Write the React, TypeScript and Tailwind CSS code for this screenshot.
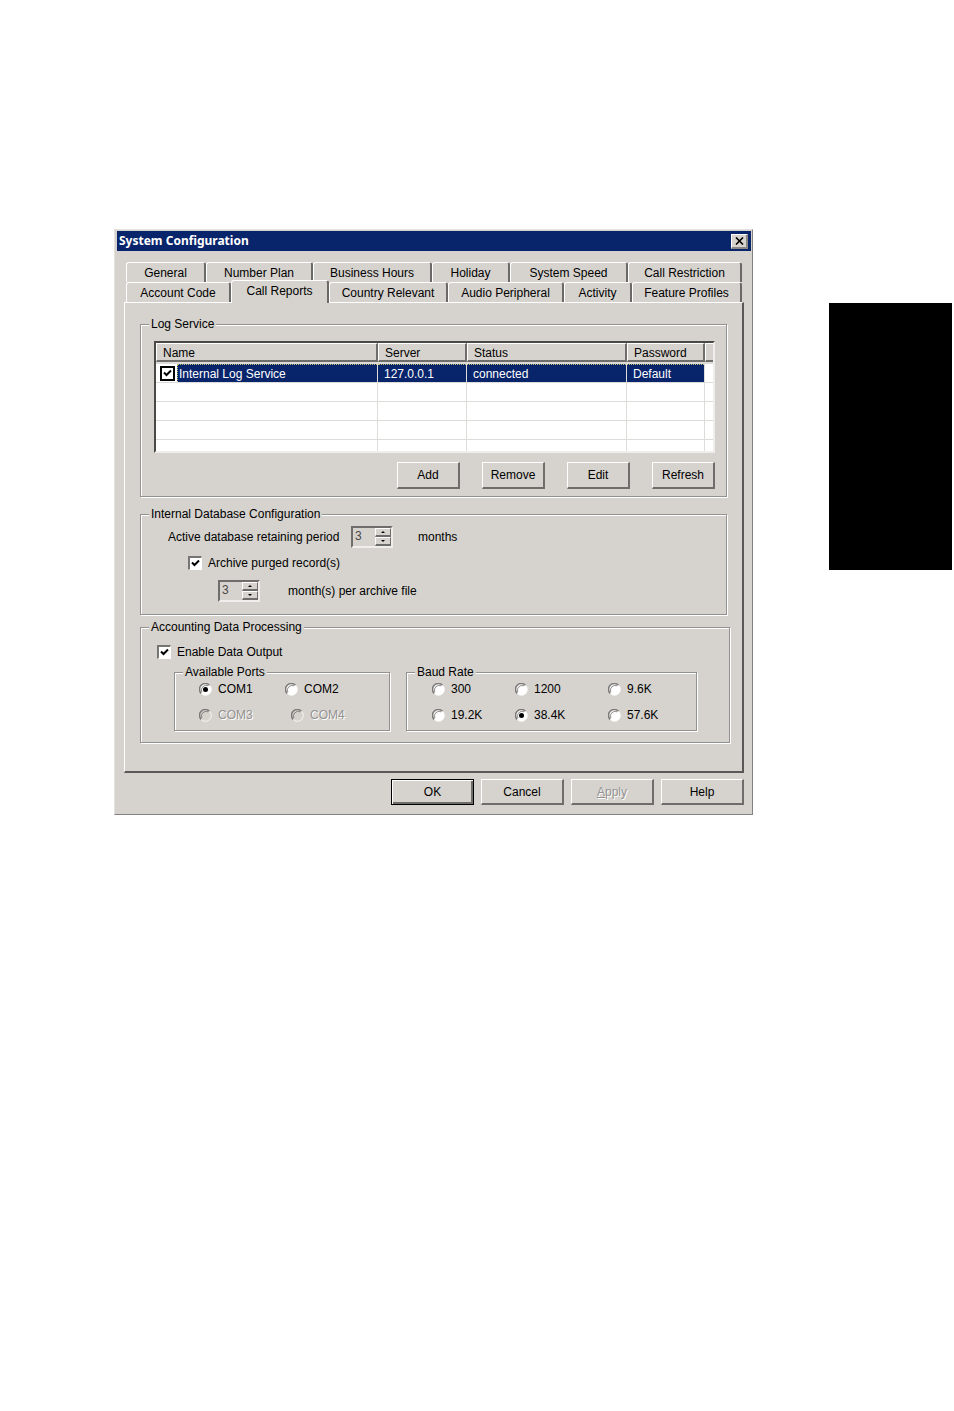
import { useState } from "react";
import type { ReactNode } from "react";
import clsx from "clsx";

const topTabs = ["General", "Number Plan", "Business Hours", "Holiday", "System Speed", "Call Restriction"];
const bottomTabs = ["Account Code", "Call Reports", "Country Relevant", "Audio Peripheral", "Activity", "Feature Profiles"];

const baudRates = ["300", "1200", "9.6K", "19.2K", "38.4K", "57.6K"];

function Tab({ label, active, onClick }: { label: string; active: boolean; onClick: () => void }) {
  return (
    <button
      type="button"
      role="tab"
      aria-selected={active}
      onClick={onClick}
      className={clsx(
        "min-w-0 whitespace-nowrap rounded-t-[3px] border-t border-l border-r-2 border-t-white border-l-white border-r-[#6b6967] bg-[#d6d3ce] text-center",
        active && "z-10 -mt-0.5 -mb-px pb-0.5"
      )}
    >
      {label}
    </button>
  );
}

function Group({ title, className, children }: { title: string; className?: string; children: ReactNode }) {
  return (
    <fieldset
      className={clsx(
        "min-w-0 border border-[#949291] shadow-[1px_1px_0_#fff,inset_1px_1px_0_#fff]",
        className
      )}
    >
      <legend className="ml-2 h-4 bg-[#d6d3ce] px-0.5 leading-4">{title}</legend>
      {children}
    </fieldset>
  );
}

function Button({ children, primary, small, disabled }: { children: ReactNode; primary?: boolean; small?: boolean; disabled?: boolean }) {
  return (
    <button
      type="button"
      disabled={disabled}
      className={clsx(
        "bg-[#d6d3ce]",
        small ? "h-[27px] w-[63px]" : "h-[26px] w-[83px]",
        primary
          ? "border border-black shadow-[inset_1px_1px_0_#fff,inset_-2px_-2px_0_#6f6d6b]"
          : "border-t border-l border-r-2 border-b-2 border-t-white border-l-white border-r-[#6f6d6b] border-b-[#6f6d6b]",
        disabled && "text-[#949291] [text-shadow:1px_1px_0_#fff]"
      )}
    >
      {children}
    </button>
  );
}

function CheckMark() {
  return (
    <svg viewBox="0 0 9 9" fill="none" stroke="black" strokeWidth="2" className="pointer-events-none invisible h-[9px] w-[9px] peer-checked:visible">
      <path d="M1 3.5l2.5 2.5L8 1.5" />
    </svg>
  );
}

function Check({ label }: { label: string }) {
  return (
    <label className="flex w-fit items-center gap-1.5 leading-4">
      <span className="grid h-3.5 w-3.5 place-items-center [&>*]:col-start-1 [&>*]:row-start-1">
        <input
          type="checkbox"
          defaultChecked
          className="peer h-3.5 w-3.5 appearance-none border-t-2 border-l-2 border-r border-b border-t-[#777573] border-l-[#777573] border-r-white border-b-white bg-white"
        />
        <CheckMark />
      </span>
      {label}
    </label>
  );
}

function Radio({ name, label, checked, disabled }: { name: string; label: string; checked?: boolean; disabled?: boolean }) {
  return (
    <label
      className={clsx(
        "flex items-center gap-1.5 leading-4",
        disabled && "text-[#949291] [text-shadow:1px_1px_0_#fff]"
      )}
    >
      <span className="grid h-[13px] w-[13px] shrink-0 place-items-center [&>*]:col-start-1 [&>*]:row-start-1">
        <input type="radio" name={name} defaultChecked={checked} disabled={disabled} className="peer h-[13px] w-[13px] appearance-none rounded-full" />
        <svg viewBox="0 0 13 13" fill="none" className="pointer-events-none h-[13px] w-[13px]">
          <circle cx="6.5" cy="6.5" r="5.8" fill={disabled ? "#d6d3ce" : "white"} stroke="white" strokeWidth=".8" />
          <path d="M2.2 10.4A5.7 5.7 0 0 1 10.4 2.2" stroke="#7b7977" strokeWidth="1.6" />
          <path d="M2.8 9A4.7 4.7 0 0 1 9 2.8" stroke="#6f6d6b" strokeWidth=".8" />
        </svg>
        <span className="pointer-events-none invisible h-[5px] w-[5px] rounded-full bg-black peer-checked:visible" />
      </span>
      {label}
    </label>
  );
}

function Spinner({ label }: { label: string }) {
  const [value, setValue] = useState(3);
  return (
    <span className="flex h-[22px] w-[42px] shrink-0 border-2 border-t-[#6f6d6b] border-l-[#6f6d6b] border-r-[#efeeec] border-b-[#efeeec]">
      <input
        aria-label={label}
        value={value}
        onChange={(e) => setValue(Number(e.target.value) || 0)}
        className="h-4 w-5 min-w-0 flex-1 bg-transparent pl-0.5 text-[#4a4948] outline-none"
      />
      <span className="flex w-4 flex-col">
        {[1, -1].map((step) => (
          <button
            key={step}
            type="button"
            aria-label={step > 0 ? "Increase" : "Decrease"}
            onClick={() => setValue(value + step)}
            className="flex flex-1 items-center justify-center border-t border-l border-r border-b-2 border-t-white border-l-white border-r-[#6f6d6b] border-b-[#6f6d6b]"
          >
            <svg viewBox="0 0 4 2" className="h-0.5 w-1">
              <path d={step > 0 ? "M0 2h4L2 0z" : "M0 0h4L2 2z"} />
            </svg>
          </button>
        ))}
      </span>
    </span>
  );
}

function LogTable() {
  return (
    <div className="h-28 overflow-hidden border-2 border-t-[#4a4948] border-l-[#4a4948] border-r-[#efeeec] border-b-[#efeeec] bg-white">
      <table className="w-full table-fixed border-separate border-spacing-0">
        <colgroup>
          <col />
          <col className="w-[89px]" />
          <col className="w-40" />
          <col className="w-[78px]" />
          <col className="w-2" />
        </colgroup>
        <thead>
          <tr className="h-[21px]">
            {["Name", "Server", "Status", "Password", ""].map((h, i) => (
              <th key={i} className="border-b-2 border-[#dedcd9] p-0 text-left font-normal">
                <div
                  className={clsx(
                    "h-[19px] border-t border-l border-b-2 border-t-white border-l-white border-b-[#6f6d6b] bg-[#d6d3ce] pl-1.5 leading-[18px]",
                    h && "border-r-2 border-r-[#6f6d6b]"
                  )}
                >
                  {h}
                </div>
              </th>
            ))}
          </tr>
        </thead>
        <tbody>
          <tr className="h-[19px] text-white [&>td]:border-b [&>td]:border-[#dedcd9] [&>td]:p-0">
            <td className="border-r">
              <div className="flex h-[18px] items-center">
                <span className="mr-0.5 ml-1 grid h-[15px] w-[15px] place-items-center [&>*]:col-start-1 [&>*]:row-start-1">
                  <input
                    id="internal-log"
                    type="checkbox"
                    defaultChecked
                    className="peer h-[15px] w-[15px] appearance-none border-2 border-black bg-white"
                  />
                  <CheckMark />
                </span>
                <label
                  htmlFor="internal-log"
                  className="h-[18px] min-w-0 flex-1 border-t border-l border-dotted border-[#c9bd6a] bg-[#08246b] pl-px leading-[18px]"
                >
                  Internal Log Service
                </label>
              </div>
            </td>
            {["127.0.0.1", "connected", "Default"].map((v) => (
              <td key={v} className="border-r">
                <div className="h-[18px] border-t border-dotted border-[#c9bd6a] bg-[#08246b] pl-1.5 leading-[18px]">{v}</div>
              </td>
            ))}
            <td />
          </tr>
          {[0, 1, 2, 3].map((r) => (
            <tr key={r} className="h-[19px]">
              {[0, 1, 2, 3, 4].map((c) => (
                <td key={c} className="border-r border-b border-[#dedcd9] p-0 last:border-r-0" />
              ))}
            </tr>
          ))}
        </tbody>
      </table>
    </div>
  );
}

export default function App() {
  const [tab, setTab] = useState("Call Reports");

  return (
    <div className="flex min-h-screen items-start bg-white pt-[229px] pr-0.5 pl-[114px] font-['Liberation_Sans',Arial,sans-serif] text-[12px] leading-4 text-black">
      <main className="min-w-0 flex-1 border border-t-[#e4e2df] border-l-[#e4e2df] border-r-[#848280] border-b-[#848280] bg-[#d6d3ce] pt-px pr-px pb-[9px] pl-0.5">
        {/* Title bar */}
        <header className="flex h-5 items-center justify-between bg-[#08246b] pr-[3px] pl-0.5">
          <h1 className="font-['Noto_Sans',sans-serif] text-[12px] font-bold text-white">System Configuration</h1>
          <button
            type="button"
            aria-label="Close"
            className="flex h-[15px] w-[17px] items-center justify-center border-t border-l border-r-2 border-b-2 border-t-white border-l-white border-r-[#8a8886] border-b-[#8a8886] bg-[#d6d3ce]"
          >
            <svg viewBox="0 0 9 8" fill="none" stroke="black" strokeWidth="1.6" className="h-2 w-[9px]">
              <path d="M1 .5l7 7M8 .5l-7 7" />
            </svg>
          </button>
        </header>

        <div className="pt-[11px] pr-[7px] pl-[7px]">
          {/* Tabs */}
          <div role="tablist" className="px-0.5">
            <div className="grid h-5 grid-cols-[80fr_107fr_119fr_78fr_118fr_114fr]">
              {topTabs.map((t) => (
                <Tab key={t} label={t} active={t === tab} onClick={() => setTab(t)} />
              ))}
            </div>
            <div className="grid h-5 grid-cols-[105fr_98fr_119fr_116fr_68fr_110fr]">
              {bottomTabs.map((t) => (
                <Tab key={t} label={t} active={t === tab} onClick={() => setTab(t)} />
              ))}
            </div>
          </div>

          <section className="border-t border-l border-r-2 border-b-2 border-t-white border-l-white border-r-[#5a5857] border-b-[#5a5857] pt-[13px] pr-3 pb-7 pl-[15px]">
            <Group title="Log Service" className="mr-[3px] pb-[7px]">
              <div className="pt-[9px] pr-[11px] pl-[13px]">
                <LogTable />
                <div className="mt-[9px] flex justify-end gap-[22px]">
                  {["Add", "Remove", "Edit", "Refresh"].map((b) => (
                    <Button key={b} small>{b}</Button>
                  ))}
                </div>
              </div>
            </Group>

            {/* Retention */}
            <Group title="Internal Database Configuration" className="mt-[9px] mr-[3px] pt-1 pb-3">
              <div className="flex items-center pl-[27px]">
                <span className="w-[183px] whitespace-nowrap">Active database retaining period</span>
                <Spinner label="Active database retaining period" />
                <span className="ml-[25px]">months</span>
              </div>
              <div className="mt-[7px] pl-[47px]">
                <Check label="Archive purged record(s)" />
              </div>
              <div className="mt-[9px] flex items-center pl-[77px]">
                <Spinner label="Months per archive file" />
                <span className="ml-7">month(s) per archive file</span>
              </div>
            </Group>

            {/* Accounting */}
            <Group title="Accounting Data Processing" className="mt-1 pt-[9px] pb-[11px]">
              <div className="pl-4">
                <Check label="Enable Data Output" />
              </div>
              <div className="mt-1 flex gap-4 pl-[33px]">
                <Group title="Available Ports" className="h-[67px] w-[216px]">
                  <div className="grid grid-cols-[86px_auto] gap-y-[10px] pt-px pl-6">
                    <Radio name="port" label="COM1" checked />
                    <Radio name="port" label="COM2" />
                    <Radio name="port" label="COM3" disabled />
                    <div className="pl-1.5">
                      <Radio name="port" label="COM4" disabled />
                    </div>
                  </div>
                </Group>
                <Group title="Baud Rate" className="h-[67px] w-[291px]">
                  <div className="grid grid-cols-[83px_93px_auto] gap-y-[10px] pt-px pl-[25px]">
                    {baudRates.map((b) => (
                      <Radio key={b} name="baud" label={b} checked={b === "38.4K"} />
                    ))}
                  </div>
                </Group>
              </div>
            </Group>
          </section>

          <footer className="mt-1.5 flex justify-end gap-[7px]">
            <Button primary>OK</Button>
            <Button>Cancel</Button>
            <Button disabled>
              <span className="underline">A</span>pply
            </Button>
            <Button>Help</Button>
          </footer>
        </div>
      </main>

      {/* Page marker */}
      <aside className="mt-[74px] ml-[76px] h-[267px] w-[123px] shrink-0 bg-black" />
    </div>
  );
}
